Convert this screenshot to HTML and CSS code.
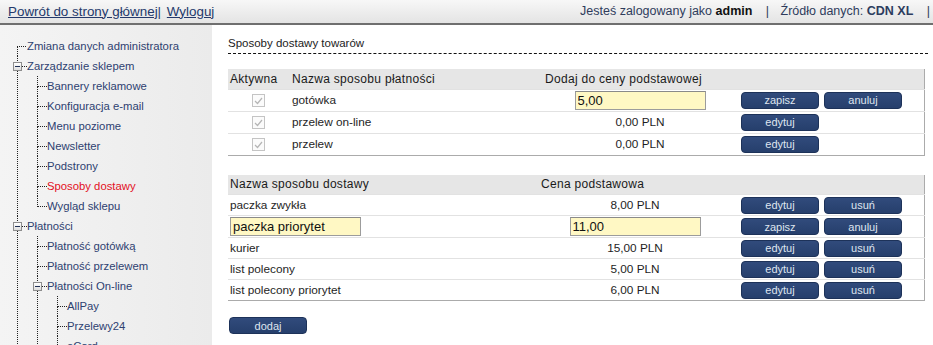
FILE: index.html
```html
<!DOCTYPE html>
<html lang="pl">
<head>
    <meta charset="UTF-8">
    <title>Sposoby dostawy</title>
    <link rel="stylesheet" href="styles.css">
</head>
<body>
    <div class="topbar">
        <div class="topbar-left">
            <a href="#">Powrót do strony głównej</a>| <a href="#">Wyloguj</a>
        </div>
        <div class="topbar-right">
            Jesteś zalogowany jako <b class="user">admin</b>
            <span class="sep">|</span>
            Źródło danych: <b>CDN XL</b>
            <span class="sep">|</span>
        </div>
    </div>

    <div class="layout">
        <div class="sidebar">
            <ul class="tree">
                <li class="first"><a href="#">Zmiana danych administratora</a></li>
                <li><span class="toggle"></span><a href="#">Zarządzanie sklepem</a>
                    <ul>
                        <li><a href="#">Bannery reklamowe</a></li>
                        <li><a href="#">Konfiguracja e-mail</a></li>
                        <li><a href="#">Menu poziome</a></li>
                        <li><a href="#">Newsletter</a></li>
                        <li><a href="#">Podstrony</a></li>
                        <li><a href="#" class="active">Sposoby dostawy</a></li>
                        <li class="last"><a href="#">Wygląd sklepu</a></li>
                    </ul>
                </li>
                <li><span class="toggle"></span><a href="#">Płatności</a>
                    <ul>
                        <li><a href="#">Płatność gotówką</a></li>
                        <li><a href="#">Płatność przelewem</a></li>
                        <li><span class="toggle"></span><a href="#">Płatności On-line</a>
                            <ul>
                                <li><a href="#">AllPay</a></li>
                                <li><a href="#">Przelewy24</a></li>
                                <li><a href="#">eCard</a></li>
                                <li class="last"><a href="#">PayU</a></li>
                            </ul>
                        </li>
                    </ul>
                </li>
                <li class="last"><a href="#">Raporty</a></li>
            </ul>
        </div>

        <div class="content">
            <div class="page-title">Sposoby dostawy towarów</div>

            <table class="grid payments">
                <colgroup>
                    <col style="width: 60px">
                    <col style="width: 252px">
                    <col style="width: 200px">
                    <col style="width: 83px">
                    <col>
                </colgroup>
                <tr class="head">
                    <th>Aktywna</th>
                    <th>Nazwa sposobu płatności</th>
                    <th>Dodaj do ceny podstawowej</th>
                    <th></th>
                    <th></th>
                </tr>
                <tr>
                    <td class="center"><span class="check"><svg width="9" height="8" viewBox="0 0 9 8"><polyline points="1,4 3.5,6.5 8,1" fill="none" stroke="#b5b5b5" stroke-width="1.2"/></svg></span></td>
                    <td>gotówka</td>
                    <td class="center"><input class="field" type="text" value="5,00"></td>
                    <td class="act"><button class="btn">zapisz</button></td>
                    <td class="act"><button class="btn">anuluj</button></td>
                </tr>
                <tr>
                    <td class="center"><span class="check"><svg width="9" height="8" viewBox="0 0 9 8"><polyline points="1,4 3.5,6.5 8,1" fill="none" stroke="#b5b5b5" stroke-width="1.2"/></svg></span></td>
                    <td>przelew on-line</td>
                    <td class="center">0,00 PLN</td>
                    <td class="act"><button class="btn">edytuj</button></td>
                    <td></td>
                </tr>
                <tr>
                    <td class="center"><span class="check"><svg width="9" height="8" viewBox="0 0 9 8"><polyline points="1,4 3.5,6.5 8,1" fill="none" stroke="#b5b5b5" stroke-width="1.2"/></svg></span></td>
                    <td>przelew</td>
                    <td class="center">0,00 PLN</td>
                    <td class="act"><button class="btn">edytuj</button></td>
                    <td></td>
                </tr>
            </table>

            <table class="grid shipping">
                <colgroup>
                    <col style="width: 308px">
                    <col style="width: 204px">
                    <col style="width: 83px">
                    <col>
                </colgroup>
                <tr class="head">
                    <th>Nazwa sposobu dostawy</th>
                    <th>Cena podstawowa</th>
                    <th></th>
                    <th></th>
                </tr>
                <tr>
                    <td>paczka zwykła</td>
                    <td class="center">8,00 PLN</td>
                    <td class="act"><button class="btn">edytuj</button></td>
                    <td class="act"><button class="btn">usuń</button></td>
                </tr>
                <tr class="editing">
                    <td><input class="field" type="text" value="paczka priorytet"></td>
                    <td class="center"><input class="field" type="text" value="11,00"></td>
                    <td class="act"><button class="btn">zapisz</button></td>
                    <td class="act"><button class="btn">anuluj</button></td>
                </tr>
                <tr>
                    <td>kurier</td>
                    <td class="center">15,00 PLN</td>
                    <td class="act"><button class="btn">edytuj</button></td>
                    <td class="act"><button class="btn">usuń</button></td>
                </tr>
                <tr>
                    <td>list polecony</td>
                    <td class="center">5,00 PLN</td>
                    <td class="act"><button class="btn">edytuj</button></td>
                    <td class="act"><button class="btn">usuń</button></td>
                </tr>
                <tr>
                    <td>list polecony priorytet</td>
                    <td class="center">6,00 PLN</td>
                    <td class="act"><button class="btn">edytuj</button></td>
                    <td class="act"><button class="btn">usuń</button></td>
                </tr>
            </table>

            <button class="btn add">dodaj</button>
        </div>
    </div>
</body>
</html>
```

FILE: styles.css
```css
* {
    box-sizing: border-box;
}
html, body {
    height: 100%;
    overflow: hidden;
}
body {
    margin: 0;
    font-family: "Liberation Sans", Arial, sans-serif;
    font-size: 11px;
    color: #1e1e1e;
    background: #fff;
    display: flex;
    flex-direction: column;
}
.topbar {
    height: 25px;
    flex: none;
    display: flex;
    justify-content: space-between;
    align-items: center;
    padding: 0 3px 1px 8px;
    background: linear-gradient(to bottom, #f7f7f7, #e4e4e4);
    border-bottom: 2px solid #6f6f6f;
    font-size: 13px;
}
.topbar-left {
    color: #2a3d6b;
    font-size: 13.4px;
}
.topbar-left a {
    color: #24396b;
    text-decoration: underline;
}
.topbar-left a + a {
    margin-left: 2px;
}
.topbar-right {
    color: #2f3c5c;
    font-size: 12.5px;
}
.topbar-right b {
    color: #2c3c5e;
}
.topbar-right .user {
    color: #111;
}
.topbar-right .sep {
    margin: 0 8px 0 10px;
}
.topbar-right .sep:last-child {
    margin-right: 0;
}
.layout {
    flex: 1;
    display: flex;
    min-height: 0;
}
.sidebar {
    width: 212px;
    flex: none;
    padding: 11px 0 0 17px;
    background: linear-gradient(to right, #f4f4f4, #ebebeb);
    overflow: hidden;
}

/* tree menu */
.tree, .tree ul {
    list-style: none;
    margin: 0;
    padding: 0;
}
.tree ul {
    margin-left: 10px;
}
.tree li {
    position: relative;
    padding-left: 10px;
    line-height: 20px;
    font-size: 11.3px;
    white-space: nowrap;
}
.tree li::before {
    content: "";
    position: absolute;
    left: 0;
    top: 0;
    width: 9px;
    height: 10px;
    border-left: 1px dotted #222;
    border-bottom: 1px dotted #222;
}
.tree li::after {
    content: "";
    position: absolute;
    left: 0;
    top: 10px;
    bottom: 0;
    border-left: 1px dotted #222;
}
.tree li.last::after {
    display: none;
}
.tree li.first::before {
    border-left: none;
}
.tree a {
    color: #2e4170;
    text-decoration: none;
}
.tree a.active {
    color: #e3101e;
}
.toggle {
    position: absolute;
    z-index: 1;
    left: -4px;
    top: 6px;
    width: 9px;
    height: 9px;
    border: 1px solid #8d8d8d;
    background: linear-gradient(to bottom, #ffffff, #dcdcdc);
}
.toggle::after {
    content: "";
    position: absolute;
    left: 1px;
    top: 3px;
    width: 5px;
    height: 1px;
    background: #1f2f55;
}

/* content */
.content {
    flex: 1;
    padding: 12px 5px 0 16px;
}
.page-title {
    font-size: 11.5px;
    color: #222;
    padding-bottom: 4px;
    border-bottom: 1px dashed #111;
    margin-bottom: 15px;
}
.grid {
    width: calc(100% - 3px);
    border-collapse: collapse;
    table-layout: fixed;
    border-right: 1px solid #ababab;
    border-bottom: 1px solid #ababab;
    margin-bottom: 19px;
}
.grid th {
    background: #e6e6e6;
    font-weight: normal;
    font-size: 12px;
    letter-spacing: 0.3px;
    color: #1a1a1a;
    text-align: left;
    height: 20px;
    padding: 0 4px;
}
.grid td {
    height: 22px;
    padding: 0 4px;
    border-top: 1px solid #e2e2e2;
    font-size: 11.8px;
    white-space: nowrap;
}
.grid td.center {
    text-align: center;
}
.grid td.act {
    padding: 0 1px;
}
.payments th:first-child {
    padding-left: 2px;
}
.payments th:nth-child(3) {
    padding-left: 5px;
}
.shipping {
    margin-bottom: 16px;
}
.shipping th, .shipping td {
    padding-left: 2px;
}
.shipping th:nth-child(2) {
    padding-left: 5px;
}
.shipping td {
    height: 21px;
}
.shipping tr.editing td {
    height: 22px;
}
.shipping td.center {
    padding-right: 8px;
}
.check {
    display: inline-flex;
    align-items: center;
    justify-content: center;
    width: 13px;
    height: 13px;
    border: 1px solid #c4c4c4;
    background: #fbfbfb;
    vertical-align: middle;
}
.field {
    width: 131px;
    height: 19px;
    padding: 0 2px;
    border: 1px solid #9c9c9c;
    border-top-color: #8a8a8a;
    background: #fff8c4;
    font-family: "Liberation Sans", Arial, sans-serif;
    font-size: 13px;
    color: #111;
    vertical-align: middle;
}
.btn {
    width: 78px;
    height: 17px;
    padding: 0;
    border: 1px solid #1d3259;
    border-radius: 4px;
    background: linear-gradient(to bottom, #314b7c, #263f6c);
    color: #dfe5ef;
    font-family: "Liberation Sans", Arial, sans-serif;
    font-size: 11px;
    vertical-align: middle;
    cursor: pointer;
}
.add {
    margin-left: 1px;
}
```
